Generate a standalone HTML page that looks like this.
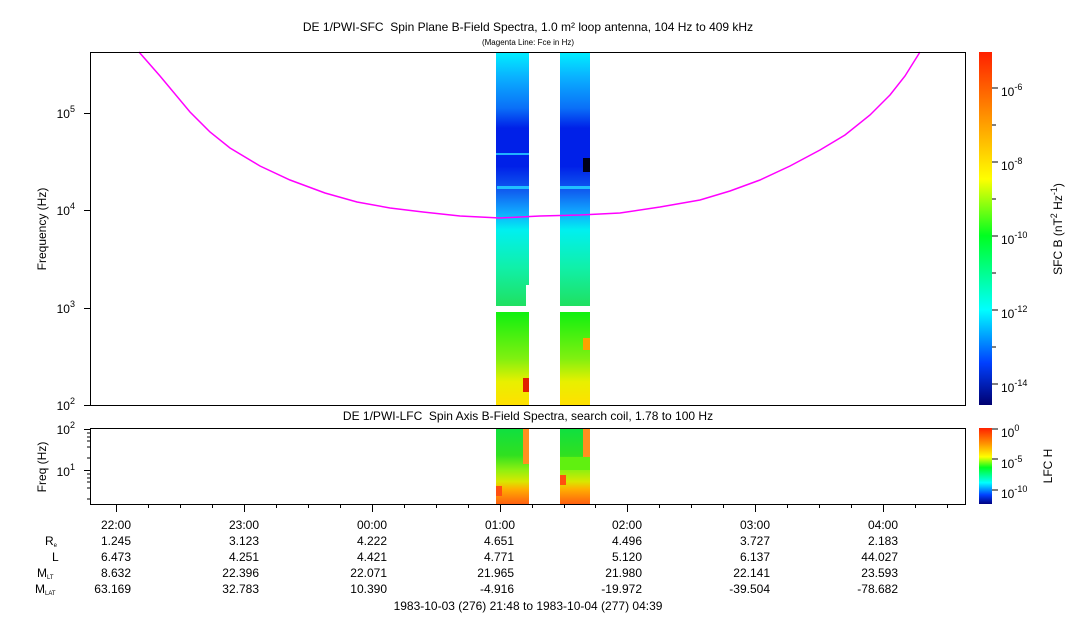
<!DOCTYPE html>
<html><head><meta charset="utf-8"><style>
html,body{margin:0;padding:0;background:#fff;}
svg{display:block;font-family:"Liberation Sans",Arial,sans-serif;}
</style></head><body>
<svg width="1083" height="620" viewBox="0 0 1083 620" xmlns="http://www.w3.org/2000/svg">
<defs>
<linearGradient id="jet" x1="0" y1="0" x2="0" y2="1">
<stop offset="0" stop-color="#ff2000"/>
<stop offset="0.18" stop-color="#ff9000"/>
<stop offset="0.36" stop-color="#ffff00"/>
<stop offset="0.52" stop-color="#00ff20"/>
<stop offset="0.73" stop-color="#00ffff"/>
<stop offset="0.88" stop-color="#0040ff"/>
<stop offset="1" stop-color="#000070"/>
</linearGradient>
<linearGradient id="jet2" x1="0" y1="0" x2="0" y2="1">
<stop offset="0" stop-color="#ff2000"/>
<stop offset="0.2" stop-color="#ff9000"/>
<stop offset="0.38" stop-color="#ffff00"/>
<stop offset="0.52" stop-color="#00ff20"/>
<stop offset="0.72" stop-color="#00ffff"/>
<stop offset="0.88" stop-color="#0040ff"/>
<stop offset="1" stop-color="#000080"/>
</linearGradient>
<linearGradient id="bar" x1="0" y1="0" x2="0" y2="1">
<stop offset="0" stop-color="#00f0ff"/>
<stop offset="0.1" stop-color="#0ab0ff"/>
<stop offset="0.22" stop-color="#0a70f8"/>
<stop offset="0.3" stop-color="#0020e8"/>
<stop offset="0.45" stop-color="#0020e8"/>
<stop offset="0.55" stop-color="#1060f0"/>
<stop offset="0.63" stop-color="#10a8ff"/>
<stop offset="0.7" stop-color="#00f0f0"/>
<stop offset="0.85" stop-color="#10f0a8"/>
<stop offset="1" stop-color="#20e060"/>
</linearGradient>
<linearGradient id="barlow" x1="0" y1="0" x2="0" y2="1">
<stop offset="0" stop-color="#10f010"/>
<stop offset="0.5" stop-color="#80f010"/>
<stop offset="0.75" stop-color="#e8f000"/>
<stop offset="1" stop-color="#ffe000"/>
</linearGradient>
<linearGradient id="lfc" x1="0" y1="0" x2="0" y2="1">
<stop offset="0" stop-color="#10e040"/>
<stop offset="0.35" stop-color="#30e020"/>
<stop offset="0.55" stop-color="#90f010"/>
<stop offset="0.7" stop-color="#d8e800"/>
<stop offset="0.8" stop-color="#ffb000"/>
<stop offset="1" stop-color="#ff6010"/>
</linearGradient>
</defs>

<text x="528" y="31" font-size="12" text-anchor="middle" xml:space="preserve">DE 1/PWI-SFC  Spin Plane B-Field Spectra, 1.0 m² loop antenna, 104 Hz to 409 kHz</text>
<text x="528" y="45" font-size="8" text-anchor="middle">(Magenta Line: Fce in Hz)</text>

<rect x="496" y="52" width="33" height="254" fill="url(#bar)"/>
<rect x="560" y="52" width="30" height="254" fill="url(#bar)"/>
<rect x="496" y="153" width="33" height="2" fill="#20b0ff"/>
<rect x="560" y="186" width="30" height="3" fill="#20c0ff"/>
<rect x="497" y="186" width="32" height="3" fill="#20c0ff"/>
<rect x="583" y="158" width="7" height="14" fill="#000018"/>
<rect x="526" y="285" width="4" height="21" fill="#fff"/>
<rect x="496" y="312" width="33" height="93" fill="url(#barlow)"/>
<rect x="560" y="312" width="30" height="93" fill="url(#barlow)"/>
<rect x="523" y="378" width="6" height="14" fill="#e02000"/>
<rect x="583" y="338" width="7" height="12" fill="#ffa000"/>

<polyline points="139,52 160,76 190,112 210,132 230,148 260,166 290,180 325,193 357,202 390,208 423,212 460,216 500,218 540,216 580,215 620,213 660,207 700,200 730,191 760,180 790,166 820,150 845,135 870,115 890,95 905,76 920,52" fill="none" stroke="#ff00ff" stroke-width="1.5"/>

<rect x="90.5" y="52.5" width="875" height="353" fill="none" stroke="#000" stroke-width="1"/>
<g stroke="#000" stroke-width="1">
<line x1="84" y1="113.5" x2="90" y2="113.5"/><line x1="84" y1="210.5" x2="90" y2="210.5"/><line x1="84" y1="308.5" x2="90" y2="308.5"/><line x1="84" y1="405.5" x2="90" y2="405.5"/>
</g>
<g font-size="12" text-anchor="end">
<text x="75" y="118">10<tspan dy="-6" font-size="9">5</tspan></text>
<text x="75" y="215">10<tspan dy="-6" font-size="9">4</tspan></text>
<text x="75" y="313">10<tspan dy="-6" font-size="9">3</tspan></text>
<text x="75" y="410">10<tspan dy="-6" font-size="9">2</tspan></text>
</g>
<text transform="translate(46,229) rotate(-90)" font-size="12" text-anchor="middle">Frequency (Hz)</text>

<rect x="979" y="52" width="13" height="353" fill="url(#jet)"/>
<g stroke="#000"><line x1="992" y1="88" x2="998" y2="88"/><line x1="992" y1="125" x2="996" y2="125"/><line x1="992" y1="162" x2="998" y2="162"/><line x1="992" y1="199" x2="996" y2="199"/><line x1="992" y1="236" x2="998" y2="236"/><line x1="992" y1="273" x2="996" y2="273"/><line x1="992" y1="310" x2="998" y2="310"/><line x1="992" y1="347" x2="996" y2="347"/><line x1="992" y1="384" x2="998" y2="384"/></g>
<g font-size="12">
<text x="1001" y="96">10<tspan dy="-6" font-size="9">-6</tspan></text>
<text x="1001" y="170">10<tspan dy="-6" font-size="9">-8</tspan></text>
<text x="1001" y="244">10<tspan dy="-6" font-size="9">-10</tspan></text>
<text x="1001" y="318">10<tspan dy="-6" font-size="9">-12</tspan></text>
<text x="1001" y="392">10<tspan dy="-6" font-size="9">-14</tspan></text>
</g>
<text transform="translate(1062,229) rotate(-90)" font-size="12" text-anchor="middle">SFC B (nT<tspan dy="-5" font-size="9">2</tspan><tspan dy="5"> Hz</tspan><tspan dy="-5" font-size="9">-1</tspan><tspan dy="5">)</tspan></text>

<text x="528" y="420" font-size="12" text-anchor="middle" xml:space="preserve">DE 1/PWI-LFC  Spin Axis B-Field Spectra, search coil, 1.78 to 100 Hz</text>

<rect x="496" y="429" width="33" height="75" fill="url(#lfc)"/>
<rect x="560" y="429" width="30" height="75" fill="url(#lfc)"/>
<rect x="523" y="429" width="6" height="35" fill="#ff9020"/>
<rect x="583" y="429" width="7" height="35" fill="#ff9020"/>
<rect x="496" y="486" width="6" height="10" fill="#ff5010"/>
<rect x="560" y="475" width="6" height="10" fill="#ff5010"/>
<rect x="560" y="457" width="30" height="13" fill="#60f010"/>

<rect x="90.5" y="428.5" width="875" height="76" fill="none" stroke="#000"/>
<g stroke="#000">
<line x1="84" y1="429.5" x2="90" y2="429.5"/><line x1="84" y1="470.5" x2="90" y2="470.5"/>
<line x1="87" y1="433" x2="90" y2="433"/><line x1="87" y1="437" x2="90" y2="437"/><line x1="87" y1="441" x2="90" y2="441"/><line x1="87" y1="447" x2="90" y2="447"/><line x1="87" y1="458" x2="90" y2="458"/>
<line x1="87" y1="474" x2="90" y2="474"/><line x1="87" y1="478" x2="90" y2="478"/><line x1="87" y1="482" x2="90" y2="482"/><line x1="87" y1="488" x2="90" y2="488"/><line x1="87" y1="499" x2="90" y2="499"/>
</g>
<g font-size="12" text-anchor="end">
<text x="75" y="434">10<tspan dy="-6" font-size="9">2</tspan></text>
<text x="75" y="476">10<tspan dy="-6" font-size="9">1</tspan></text>
</g>
<text transform="translate(46,467) rotate(-90)" font-size="12" text-anchor="middle">Freq (Hz)</text>

<rect x="979" y="428" width="13" height="76" fill="url(#jet2)"/>
<g stroke="#000"><line x1="992" y1="429" x2="998" y2="429"/><line x1="992" y1="459" x2="998" y2="459"/><line x1="992" y1="490" x2="998" y2="490"/></g>
<g font-size="12">
<text x="1001" y="437">10<tspan dy="-6" font-size="9">0</tspan></text>
<text x="1001" y="468">10<tspan dy="-6" font-size="9">-5</tspan></text>
<text x="1001" y="498">10<tspan dy="-6" font-size="9">-10</tspan></text>
</g>
<text transform="translate(1052,466) rotate(-90)" font-size="12" text-anchor="middle">LFC H</text>

<g stroke="#000">
<line x1="116.5" y1="504" x2="116.5" y2="512"/><line x1="244.5" y1="504" x2="244.5" y2="512"/><line x1="372.5" y1="504" x2="372.5" y2="512"/><line x1="500.5" y1="504" x2="500.5" y2="512"/><line x1="627.5" y1="504" x2="627.5" y2="512"/><line x1="755.5" y1="504" x2="755.5" y2="512"/><line x1="883.5" y1="504" x2="883.5" y2="512"/>
<line x1="148.5" y1="504" x2="148.5" y2="508"/><line x1="180.5" y1="504" x2="180.5" y2="508"/><line x1="212.5" y1="504" x2="212.5" y2="508"/>
<line x1="276.5" y1="504" x2="276.5" y2="508"/><line x1="308.5" y1="504" x2="308.5" y2="508"/><line x1="340.5" y1="504" x2="340.5" y2="508"/>
<line x1="404.5" y1="504" x2="404.5" y2="508"/><line x1="436.5" y1="504" x2="436.5" y2="508"/><line x1="468.5" y1="504" x2="468.5" y2="508"/>
<line x1="532.5" y1="504" x2="532.5" y2="508"/><line x1="564.5" y1="504" x2="564.5" y2="508"/><line x1="595.5" y1="504" x2="595.5" y2="508"/>
<line x1="659.5" y1="504" x2="659.5" y2="508"/><line x1="691.5" y1="504" x2="691.5" y2="508"/><line x1="723.5" y1="504" x2="723.5" y2="508"/>
<line x1="787.5" y1="504" x2="787.5" y2="508"/><line x1="819.5" y1="504" x2="819.5" y2="508"/><line x1="851.5" y1="504" x2="851.5" y2="508"/>
<line x1="915.5" y1="504" x2="915.5" y2="508"/><line x1="947.5" y1="504" x2="947.5" y2="508"/>
</g>
<g font-size="12" text-anchor="middle">
<text x="116" y="529">22:00</text><text x="244" y="529">23:00</text><text x="372" y="529">00:00</text><text x="500" y="529">01:00</text><text x="627" y="529">02:00</text><text x="755" y="529">03:00</text><text x="883" y="529">04:00</text>
</g>
<g font-size="12" text-anchor="end">
<text x="131" y="545">1.245</text><text x="259" y="545">3.123</text><text x="387" y="545">4.222</text><text x="514" y="545">4.651</text><text x="642" y="545">4.496</text><text x="770" y="545">3.727</text><text x="898" y="545">2.183</text>
<text x="131" y="561">6.473</text><text x="259" y="561">4.251</text><text x="387" y="561">4.421</text><text x="514" y="561">4.771</text><text x="642" y="561">5.120</text><text x="770" y="561">6.137</text><text x="898" y="561">44.027</text>
<text x="131" y="577">8.632</text><text x="259" y="577">22.396</text><text x="387" y="577">22.071</text><text x="514" y="577">21.965</text><text x="642" y="577">21.980</text><text x="770" y="577">22.141</text><text x="898" y="577">23.593</text>
<text x="131" y="593">63.169</text><text x="259" y="593">32.783</text><text x="387" y="593">10.390</text><text x="514" y="593">-4.916</text><text x="642" y="593">-19.972</text><text x="770" y="593">-39.504</text><text x="898" y="593">-78.682</text>
</g>
<g font-size="12">
<text x="45" y="545">R<tspan font-size="6" dy="2">e</tspan></text>
<text x="52" y="561">L</text>
<text x="37" y="577">M<tspan font-size="6" dy="2">LT</tspan></text>
<text x="35" y="593">M<tspan font-size="6" dy="2">LAT</tspan></text>
</g>
<text x="528" y="610" font-size="12" text-anchor="middle">1983-10-03 (276) 21:48 to 1983-10-04 (277) 04:39</text>
</svg>
</body></html>
